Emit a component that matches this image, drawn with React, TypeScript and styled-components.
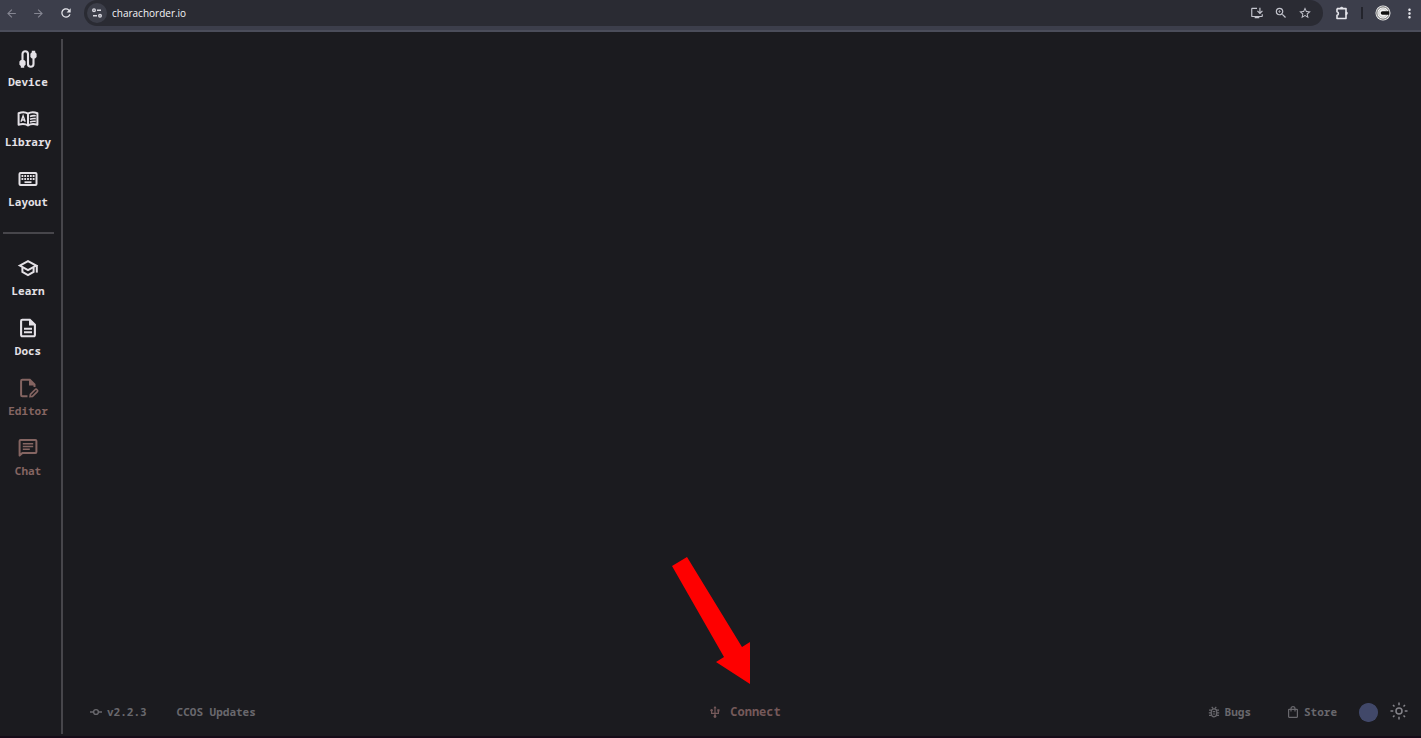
import React from 'react';
import styled, { createGlobalStyle, css } from 'styled-components';
import {
  MdArrowBack,
  MdArrowForward,
  MdRefresh,
  MdInstallDesktop,
  MdZoomIn,
  MdStarBorder,
  MdMoreVert,
} from 'react-icons/md';

const GlobalStyle = createGlobalStyle`
  * { box-sizing: border-box; }
  html, body, #root { height: 100%; }
  body {
    margin: 0;
    background: #1b1b1f;
    color: #e4e1e6;
    font-family: "Noto Sans Mono", "DejaVu Sans Mono", "Liberation Mono", monospace;
    overflow: hidden;
  }
`;

const Window = styled.div`
  display: flex;
  flex-direction: column;
  height: 100%;
  border-bottom: 2px solid #150c18;
`;

const BrowserBar = styled.header`
  display: flex;
  align-items: center;
  flex: none;
  height: 32px;
  padding: 0 0 4px 4px;
  background: #3c3e4b;
  border-bottom: 2px solid #4b4d5a;
`;

const BarButton = styled.button<{ $dim?: boolean; $width?: number }>`
  display: flex;
  align-items: center;
  justify-content: center;
  flex: none;
  width: ${({ $width = 27 }) => $width}px;
  height: 24px;
  padding: 0;
  border: 0;
  background: none;
  color: ${({ $dim }) => ($dim ? '#858692' : '#e6e6ec')};
`;

const BackGroup = styled.div`
  display: flex;
  flex: none;
  width: 80px;
  margin-left: -6px;
  margin-right: 6px;
`;

const AddressBar = styled.form`
  display: flex;
  align-items: center;
  flex: 1;
  height: 26px;
  padding: 0 6px 0 3px;
  border-radius: 13px;
  background: #2a2b33;
`;

const SiteInfo = styled.button`
  display: flex;
  align-items: center;
  justify-content: center;
  flex: none;
  width: 20px;
  height: 20px;
  padding: 0;
  border: 0;
  border-radius: 50%;
  background: #3c3e49;
  color: #d8d8e0;
`;

const AddressInput = styled.input`
  flex: 1;
  min-width: 0;
  height: 20px;
  padding: 0 5px;
  border: 0;
  outline: 0;
  background: none;
  color: #f4f4f8;
  font: 10px/20px "Open Sans", "Noto Sans", sans-serif;
`;

const AddressAction = styled(BarButton)`
  width: 24px;
  color: #c4c5ce;
`;

const BarDivider = styled.span`
  width: 2px;
  height: 12px;
  margin-right: 6px;
  background: #23242c;
`;

const Body = styled.div`
  display: flex;
  flex: 1;
  min-height: 0;
  padding: 7px 0 2px;
`;

const Sidebar = styled.nav`
  flex: none;
  width: 63px;
  padding: 9px 5px 0 0;
  border-right: 2px solid #47464b;
`;

const NavGroup = styled.ul`
  display: flex;
  flex-direction: column;
  gap: 16px;
  margin: 0;
  padding: 0;
  list-style: none;
`;

const NavDivider = styled.hr`
  height: 2px;
  margin: 20px 2px 23px 3px;
  border: 0;
  background: #47464b;
`;

const NavLink = styled.a<{ $muted?: boolean }>`
  display: flex;
  flex-direction: column;
  align-items: center;
  gap: 2px;
  height: 44px;
  color: ${({ $muted }) => ($muted ? '#856562' : '#e4e1e6')};
  font-size: 11px;
  font-weight: 700;
  line-height: 20px;
  text-decoration: none;

  svg { flex: none; }
`;

const Main = styled.div`
  display: flex;
  flex-direction: column;
  flex: 1;
  min-width: 0;
`;

const Content = styled.main`
  flex: 1;
`;

const Footer = styled.footer`
  display: grid;
  grid-template-columns: 1fr auto 1fr;
  align-items: center;
  height: 44px;
  padding: 0 13px 0 19px;
`;

const FooterSide = styled.div<{ $end?: boolean }>`
  display: flex;
  align-items: center;
  justify-content: ${({ $end }) => ($end ? 'flex-end' : 'flex-start')};
  gap: ${({ $end }) => ($end ? 20 : 14)}px;
`;

const footerItem = css`
  display: flex;
  align-items: center;
  padding: 0;
  border: 0;
  background: none;
  font-family: inherit;
  font-weight: 700;
  line-height: 20px;
  text-decoration: none;
`;

const FooterLink = styled.a`
  ${footerItem}
  gap: 5px;
  padding: 0 8px;
  color: #69686d;
  font-size: 11px;
`;

const ConnectArea = styled.div`
  position: relative;
`;

const ConnectButton = styled.button`
  ${footerItem}
  gap: 9px;
  color: #75595a;
  font-size: 12px;
`;

const Pointer = styled.svg`
  position: absolute;
  right: 29px;
  bottom: 37px;
`;

const ThemeControls = styled.div`
  display: flex;
  align-items: center;
  gap: 12px;
  margin-left: -6px;
`;

const Swatch = styled.input`
  width: 19px;
  height: 19px;
  padding: 0;
  border: 0;
  border-radius: 50%;
  background: #414869;
  appearance: none;

  &::-webkit-color-swatch-wrapper { padding: 0; }
  &::-webkit-color-swatch { border: 0; border-radius: 50%; }
`;

const ThemeButton = styled.button`
  ${footerItem}
  padding-bottom: 2px;
  color: #85848a;
`;

const TuneIcon = () => (
  <svg width="12" height="12" viewBox="0 0 12 12" fill="none" stroke="currentColor" strokeWidth="1.4">
    <circle cx="3" cy="3.2" r="1.3" />
    <path d="M6 3.2h4M2 8.8h4" />
    <circle cx="9" cy="8.8" r="1.3" />
  </svg>
);

const ExtensionIcon = () => (
  <svg width="16" height="16" viewBox="0 0 16 16" fill="none" stroke="currentColor" strokeWidth="1.6">
    <path
      d="M3 3.600h9v3.200M12 9.800v3.700H3v-3.200a1.800 1.800 0 0 0 0-3.500V3.600"
      strokeLinejoin="round"
    />
    <path d="M6.200 3.600a1.500 1.500 0 0 1 3 0zM12 6.700a1.500 1.500 0 0 1 0 3z" fill="currentColor" strokeWidth=".6" />
    <path d="M12 6.500v3.500" />
  </svg>
);

const ProfileIcon = () => (
  <svg width="16" height="16" viewBox="0 0 16 16">
    <circle cx="8" cy="8" r="7.5" fill="#f4f4f4" />
    <circle cx="8" cy="8" r="6.2" fill="none" stroke="#444" strokeWidth=".8" />
    <circle cx="8" cy="8" r="4.2" fill="none" stroke="#999" strokeWidth=".6" />
    <path d="M7.5 6.2H14v3.6H7.5a1.8 1.8 0 0 1 0-3.6z" fill="#111" />
  </svg>
);

const CableIcon = () => (
  <svg width="22" height="22" viewBox="0 0 22 22" fill="none" stroke="currentColor" strokeWidth="2.1">
    <path d="M5.5 14V6a2.75 2.75 0 0 1 5.5 0v10a2.75 2.75 0 0 0 5.5 0V8" />
    <path
      d="M3.9 11.9h3.2l1.5 1.6v3.2l-1.4 1.4v1.6H3.8v-1.6l-1.4-1.4v-3.2zM14.9 10.5h3.2l1.5-1.6V5.7l-1.4-1.4V2.7h-3.4v1.6l-1.4 1.4v3.2z"
      fill="currentColor"
      stroke="none"
    />
  </svg>
);

const DictionaryIcon = () => (
  <svg width="22" height="22" viewBox="0 0 22 22" fill="none" stroke="currentColor" strokeWidth="2">
    <path
      d="M11 5.6C8.6 4 4.8 3.9 1.6 5.2v11.5c3.2-1 6.9-.9 9.4.7 2.5-1.6 6.2-1.7 9.4-.7V5.2C17.2 3.9 13.4 4 11 5.6zv11.8"
      strokeLinejoin="round"
    />
    <path d="M4 13.8 6.1 7.8l2.1 6M4.7 12h2.9" strokeWidth="1.4" />
    <path d="M13 8.5c1.8-.8 3.7-1 5.8-.7M13 11.3c1.8-.8 3.7-1 5.8-.7M13 14.1c1.8-.8 3.7-1 5.8-.7" strokeWidth="1.6" />
  </svg>
);

const KeyboardIcon = () => (
  <svg width="22" height="22" viewBox="0 0 22 22" fill="none" stroke="currentColor">
    <rect x="2.5" y="5" width="17" height="12" rx="1" strokeWidth="2" />
    <path d="M4.5 8h13M4.5 11h13" strokeWidth="2" strokeDasharray="1.8 1" />
    <path d="M7.5 14.2h7" strokeWidth="1.8" />
  </svg>
);

const SchoolIcon = () => (
  <svg width="22" height="22" viewBox="0 0 22 22" fill="none" stroke="currentColor" strokeWidth="2">
    <path d="M2.8 8.6 11 4.1l8.2 4.500L11 13.100z" />
    <path d="M5.400 10.500v4.400l5.600 3.100 5.600-3.100v-4.400" />
    <path d="M19.800 8.200v7.400" />
  </svg>
);

const DocumentIcon = () => (
  <svg width="22" height="22" viewBox="0 0 22 22" fill="none" stroke="currentColor" strokeWidth="2.1">
    <path d="M12.8 2.7H5.3a1.2 1.2 0 0 0-1.2 1.2v14.2a1.2 1.2 0 0 0 1.2 1.2h11.4a1.2 1.2 0 0 0 1.2-1.2V7.8z" />
    <path d="M12 2.3v6.3h6.3z" fill="currentColor" stroke="none" />
    <path d="M7 11.7h8M7 15.2h8" strokeWidth="1.9" />
  </svg>
);

const EditDocumentIcon = () => (
  <svg width="22" height="22" viewBox="0 0 22 22" fill="none" stroke="currentColor" strokeWidth="2">
    <path d="M10.5 19.3H5.3a1.2 1.2 0 0 1-1.2-1.2V3.9a1.2 1.2 0 0 1 1.2-1.2h7.5l4.7 4.7v2.6" />
    <path d="M12 2.3v6.2h6.2z" fill="currentColor" stroke="none" />
    <path d="m13.1 19.6.3-2.3 4.8-4.8a1.1 1.1 0 0 1 1.6 0l.5.5a1.1 1.1 0 0 1 0 1.6l-4.8 4.8z" strokeWidth="1.7" />
  </svg>
);

const ChatIcon = () => (
  <svg width="22" height="22" viewBox="0 0 22 22" fill="none" stroke="currentColor" strokeWidth="2">
    <path d="M2.6 18.5V4a1 1 0 0 1 1-1h14.8a1 1 0 0 1 1 1v11a1 1 0 0 1-1 1H5.4z" strokeLinejoin="round" />
    <path d="M5.8 6.7h10.4M5.8 9.5h10.4M5.8 12.3h7" strokeWidth="1.6" />
  </svg>
);

const CommitIcon = () => (
  <svg width="12" height="12" viewBox="0 0 12 12" fill="none" stroke="currentColor" strokeWidth="1.4">
    <circle cx="6" cy="6" r="2.4" />
    <path d="M0 6h3.5M8.5 6H12" />
  </svg>
);

const UsbIcon = () => (
  <svg width="12" height="12" viewBox="0 0 12 12" fill="none" stroke="currentColor" strokeWidth="1.2">
    <path d="M6 1.5V10M2.6 5v2.300h6.800V4.500" />
    <path d="M6 0 4.400 2.300h3.200zM8.300 3.200h2.200v2.200H8.300z" fill="currentColor" stroke="none" />
    <circle cx="2.600" cy="4.300" r="1.200" fill="currentColor" stroke="none" />
    <circle cx="6" cy="10.500" r="1.400" fill="currentColor" stroke="none" />
  </svg>
);

const BugIcon = () => (
  <svg width="12" height="12" viewBox="0 0 12 12" fill="none" stroke="currentColor" strokeWidth="1.2">
    <rect x="3.300" y="2.800" width="5.400" height="8" rx="2.700" />
    <path d="M1 4.200h2.600M8.400 4.200H11M.8 6.800h2.500M8.700 6.800h2.500M1 9.400h2.600M8.400 9.400H11M4.700 5.700h2.600M4.700 8h2.600M3.700.8l1.600 1.800M8.300.8 6.700 2.600" />
  </svg>
);

const BagIcon = () => (
  <svg width="12" height="12" viewBox="0 0 12 12" fill="none" stroke="currentColor" strokeWidth="1.2">
    <rect x="1.600" y="3.300" width="8.800" height="8" rx=".5" />
    <path d="M4 5.600V2.700a2 2 0 0 1 4 0v2.900" />
  </svg>
);

const SunIcon = () => (
  <svg width="18" height="18" viewBox="0 0 18 18" fill="none" stroke="currentColor" strokeWidth="1.5">
    <circle cx="9" cy="9" r="3" />
    <path d="M9 .5v2.8M9 14.7v2.8M.5 9h2.8M14.7 9h2.8M3 3l1.5 1.5M13.5 13.5 15 15M3 15l1.5-1.5M13.5 4.5 15 3" />
  </svg>
);

type NavItem = { label: string; icon: React.ReactNode; muted?: boolean };

const deviceLinks: NavItem[] = [
  { label: 'Device', icon: <CableIcon /> },
  { label: 'Library', icon: <DictionaryIcon /> },
  { label: 'Layout', icon: <KeyboardIcon /> },
];

const resourceLinks: NavItem[] = [
  { label: 'Learn', icon: <SchoolIcon /> },
  { label: 'Docs', icon: <DocumentIcon /> },
  { label: 'Editor', icon: <EditDocumentIcon />, muted: true },
  { label: 'Chat', icon: <ChatIcon />, muted: true },
];

const NavList = ({ items }: { items: NavItem[] }) => (
  <NavGroup>
    {items.map(({ label, icon, muted }) => (
      <li key={label}>
        <NavLink href={`#${label.toLowerCase()}`} $muted={muted}>
          {icon}
          {label}
        </NavLink>
      </li>
    ))}
  </NavGroup>
);

export default function App() {
  return (
    <Window>
      <GlobalStyle />
      <BrowserBar>
        <BackGroup>
          <BarButton $dim aria-label="Back"><MdArrowBack size={13} /></BarButton>
          <BarButton $dim aria-label="Forward"><MdArrowForward size={13} /></BarButton>
          <BarButton aria-label="Reload"><MdRefresh size={14} /></BarButton>
        </BackGroup>
        <AddressBar onSubmit={(e) => e.preventDefault()}>
          <SiteInfo type="button" aria-label="Site information"><TuneIcon /></SiteInfo>
          <AddressInput aria-label="Address" defaultValue="charachorder.io" />
          <AddressAction type="button" aria-label="Install app"><MdInstallDesktop size={14} /></AddressAction>
          <AddressAction type="button" aria-label="Zoom"><MdZoomIn size={14} /></AddressAction>
          <AddressAction type="button" aria-label="Bookmark"><MdStarBorder size={14} /></AddressAction>
        </AddressBar>
        <BarButton $width={38} aria-label="Extensions"><ExtensionIcon /></BarButton>
        <BarDivider />
        <BarButton $width={28} aria-label="Profile"><ProfileIcon /></BarButton>
        <BarButton $width={24} aria-label="Menu"><MdMoreVert size={15} /></BarButton>
      </BrowserBar>
      <Body>
        <Sidebar>
          <NavList items={deviceLinks} />
          <NavDivider />
          <NavList items={resourceLinks} />
        </Sidebar>
        <Main>
          <Content />
          <Footer>
            <FooterSide>
              <FooterLink href="#version"><CommitIcon />v2.2.3</FooterLink>
              <FooterLink href="#updates">CCOS Updates</FooterLink>
            </FooterSide>
            <ConnectArea>
              <Pointer width="80" height="128" viewBox="0 0 80 128" aria-hidden="true">
                <path d="M15 0 0 9l52 91-8 5 34 22V85l-8 5z" fill="#fe0000" />
              </Pointer>
              <ConnectButton><UsbIcon />Connect</ConnectButton>
            </ConnectArea>
            <FooterSide $end>
              <FooterLink href="#bugs"><BugIcon />Bugs</FooterLink>
              <FooterLink href="#store"><BagIcon />Store</FooterLink>
              <ThemeControls>
                <Swatch type="color" defaultValue="#414869" aria-label="Theme color" />
                <ThemeButton aria-label="Toggle theme"><SunIcon /></ThemeButton>
              </ThemeControls>
            </FooterSide>
          </Footer>
        </Main>
      </Body>
    </Window>
  );
}
